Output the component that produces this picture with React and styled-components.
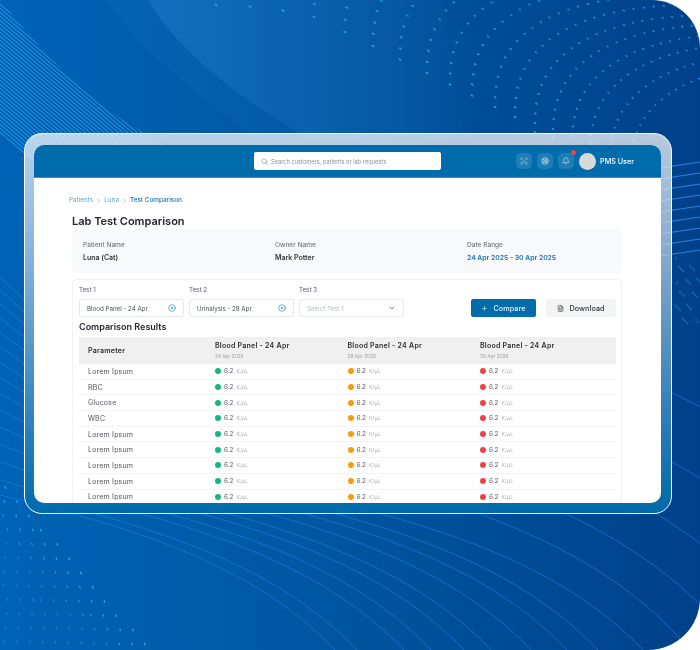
import React from "react";
import styled, { createGlobalStyle } from "styled-components";
import {
  Bell,
  ChevronDown,
  ChevronRight,
  CircleX,
  FileText,
  LifeBuoy,
  Plus,
  ScanFace,
  Search,
} from "lucide-react";

const GlobalStyle = createGlobalStyle`
  html, body { margin: 0; padding: 0; background: #fff; }
  * { box-sizing: border-box; }
  body { font-family: Inter, "Noto Sans", "Liberation Sans", sans-serif; }
`;

const Poster = styled.div`
  position: relative;
  width: 700px;
  height: 650px;
  overflow: hidden;
  border-radius: 0 48px 52px 0;
  background: linear-gradient(90deg, #0063b6 0%, #00559f 50%, #00408a 100%);
  padding: 133px 28px 136px 24px;
`;

const Backdrop = styled.svg`
  position: absolute;
  inset: 0;
  width: 700px;
  height: 650px;
`;

const Frame = styled.div`
  position: relative;
  height: 381px;
  border: 1px solid #fff;
  border-radius: 18px;
  padding: 11px 10px 10px 9px;
  will-change: transform;
  background: linear-gradient(
    180deg,
    rgba(255, 255, 255, 0.72) 0%,
    rgba(210, 225, 240, 0.66) 30%,
    rgba(60, 140, 195, 0.78) 75%,
    rgba(0, 108, 171, 0.95) 100%
  );
`;

const Screen = styled.div`
  height: 358px;
  overflow: hidden;
  border-radius: 10px;
  background: #fff;
`;

const Header = styled.header`
  height: 33px;
  display: flex;
  align-items: center;
  justify-content: space-between;
  padding: 0 27px 0 220px;
  background: #006cab;
  border-bottom: 1px solid #3f90c2;
`;

const SearchBox = styled.div`
  width: 187px;
  height: 18px;
  display: flex;
  align-items: center;
  gap: 3px;
  padding: 0 7px;
  background: #fff;
  border-radius: 2px;
  color: #8a8f98;
  font-size: 5.7px;
`;

const HeaderRight = styled.div`
  display: flex;
  align-items: center;
  gap: 5px;
  color: #fff;
`;

const IconChip = styled.div`
  position: relative;
  width: 16px;
  height: 16px;
  display: grid;
  place-items: center;
  border-radius: 5px;
  background: rgba(255, 255, 255, 0.12);
  color: #cfe3f1;
`;

const Badge = styled.span`
  position: absolute;
  top: -3px;
  right: -2px;
  width: 5px;
  height: 5px;
  border-radius: 50%;
  background: #ef4444;
`;

const Avatar = styled.div`
  width: 17px;
  height: 17px;
  border-radius: 50%;
  background: #d9d9d9;
`;

const UserName = styled.span`
  margin-left: -1px;
  font-size: 7.2px;
  font-weight: 500;
`;

const Page = styled.div`
  padding: 17px 39px 0 35px;
`;

const Crumbs = styled.nav`
  display: flex;
  align-items: center;
  gap: 2px;
  height: 10px;
  font-size: 6.4px;
  color: #67a5d0;
`;

const CrumbCurrent = styled.span`
  color: #1473b3;
  font-weight: 500;
`;

const Title = styled.h1`
  margin: 9px 0 1px 3px;
  height: 14px;
  font-size: 11px;
  line-height: 14px;
  font-weight: 600;
  color: #20242c;
`;

const InfoCard = styled.section`
  margin-left: 3px;
  height: 44px;
  display: grid;
  grid-template-columns: 192px 192px 1fr;
  padding: 12px 11px 0;
  background: #f8f9fb;
  border-radius: 4px;
`;

const InfoLabel = styled.div`
  font-size: 6.6px;
  line-height: 9px;
  color: #5d6470;
`;

const InfoValue = styled.div`
  margin-top: 3px;
  font-size: ${(p) => (p.$accent ? "6.8px" : "7px")};
  line-height: 9px;
  font-weight: 600;
  color: ${(p) => (p.$accent ? "#1473b3" : "#30343b")};
`;

const Panel = styled.section`
  margin: 6px 0 0 3px;
  height: 300px;
  padding: 5px 5px 0 6px;
  border: 1px solid #f1f2f4;
  border-radius: 4px;
`;

const Filters = styled.div`
  display: flex;
  align-items: flex-end;
  height: 32px;
`;

const Field = styled.div`
  width: 105px;
  margin-right: 5px;
`;

const FieldLabel = styled.div`
  height: 14px;
  font-size: 6.2px;
  line-height: 9px;
  color: #555b66;
`;

const Select = styled.div`
  height: 18px;
  display: flex;
  align-items: center;
  justify-content: space-between;
  padding: 0 7px;
  border: 1px solid #e4e7eb;
  border-radius: 3px;
  font-size: 6.2px;
  color: ${(p) => (p.$empty ? "#b4b8bf" : "#4a4f59")};
`;

const Actions = styled.div`
  margin-left: auto;
  display: flex;
  gap: 10px;
`;

const Button = styled.button`
  height: 18px;
  width: ${(p) => p.$width}px;
  display: flex;
  align-items: center;
  justify-content: center;
  gap: 5px;
  padding: 0;
  border: 0;
  border-radius: 2px;
  font: inherit;
  font-size: 7.2px;
  font-weight: 500;
  letter-spacing: 0.1px;
  background: ${(p) => (p.$primary ? "#006cab" : "#f3f4f6")};
  color: ${(p) => (p.$primary ? "#e6f1f8" : "#2f333a")};
`;

const SectionTitle = styled.h2`
  margin: 3px 0 3px;
  height: 14px;
  font-size: 9px;
  line-height: 14px;
  font-weight: 600;
  color: #23272e;
`;

const Table = styled.div`
  display: grid;
  grid-template-columns: 136px 132.5px 132.5px 1fr;
`;

const HeadCell = styled.div`
  height: 27px;
  display: flex;
  flex-direction: column;
  justify-content: center;
  background: #f0f0f0;
  padding-left: ${(p) => (p.$first ? "9px" : "0")};
`;

const HeadTitle = styled.div`
  font-size: 7px;
  line-height: 10px;
  font-weight: 600;
  letter-spacing: 0.25px;
  color: #2a2d33;
`;

const HeadDate = styled.div`
  margin-top: 2px;
  font-size: 4.8px;
  line-height: 7px;
  color: #9a9da3;
`;

const Cell = styled.div`
  height: 15.7px;
  display: flex;
  align-items: center;
  padding-left: ${(p) => (p.$first ? "9px" : "0")};
  border-bottom: 1px solid #f4f4f5;
  font-size: 7px;
  letter-spacing: 0.2px;
  color: #50545c;
`;

const StatusDot = styled.span`
  width: 6px;
  height: 6px;
  margin-right: 3px;
  border-radius: 50%;
  background: ${(p) => p.$color};
`;

const Reading = styled.span`
  font-size: 6.4px;
  letter-spacing: 0;
  color: #5a5e66;
`;

const Unit = styled.span`
  margin-left: 3px;
  font-size: 5.2px;
  letter-spacing: 0.1px;
  color: #adb0b5;
`;

const parameters = [
  "Lorem Ipsum",
  "RBC",
  "Glucose",
  "WBC",
  "Lorem Ipsum",
  "Lorem Ipsum",
  "Lorem Ipsum",
  "Lorem Ipsum",
  "Lorem Ipsum",
];

const columns = [
  { title: "Blood Panel - 24 Apr", date: "24 Apr 2025", color: "#10b981" },
  { title: "Blood Panel - 24 Apr", date: "28 Apr 2025", color: "#f59e0b" },
  { title: "Blood Panel - 24 Apr", date: "30 Apr 2025", color: "#ef4444" },
];

// dotted arcs at the top right of the artwork
const arcStops = [
  216, 250, 283, 314, 345, 373, 400, 427, 450, 472, 495, 515, 535, 553, 572, 590, 610, 630,
];

function arcDashes() {
  const dashes = [];
  arcStops.forEach((xv) => {
    const yEnd = 5 + 0.00125 * (xv - 216) ** 2;
    const top = 5 + (xv - 515) * 0.5;
    const a = 190;
    const b = 112;
    const step = 13 - (xv - 216) * 0.012;
    const rx = 2 - (xv - 216) * 0.0017;
    const points = [];
    for (let y = yEnd; y > top + b; y -= 1) points.push([xv, y]);
    for (let i = 0; i <= 200; i += 1) {
      const t = (i / 200) * (Math.PI / 2);
      points.push([
        xv + a * (1 - Math.cos(t) ** 0.8),
        top + b * (1 - Math.sin(t) ** 0.8),
      ]);
    }
    let run = step;
    let walked = 0;
    points.forEach(([x, y], i) => {
      if (i > 0) {
        const d = Math.hypot(x - points[i - 1][0], y - points[i - 1][1]);
        run += d;
        walked += d;
      }
      if (run >= step && x < 705 && y > -4) {
        run = 0;
        const opacity = Math.max(0.7, 1 - walked / 300);
        dashes.push({ x, y, rx, opacity, key: `${xv}-${i}` });
      }
    });
  });
  return dashes;
}

// dashes in the bottom left corner, brightest along the diagonal edge
function cornerDashes() {
  const dashes = [];
  for (let x = 3; x < 150; x += 12.5) {
    const edge = 484 + 1.14 * x;
    for (let y = edge; y < 655; y += 14) {
      const opacity = Math.max(0.45, 1 - (y - edge) / 110);
      dashes.push({ x: x + (y % 5), y, opacity, key: `${x}-${y}` });
    }
  }
  return dashes;
}

const sweepEnds = [335, 357, 404, 431, 464, 491, 531, 567, 598, 643, 690, 740, 800, 870, 950, 1040];

function Artwork() {
  return (
    <Backdrop viewBox="0 0 700 650">
      <defs>
        <linearGradient id="glow" x1="0" x2="1" y1="0" y2="0">
          <stop offset="0" stopColor="#4aa3f0" stopOpacity="0.2" />
          <stop offset="1" stopColor="#4aa3f0" stopOpacity="0" />
        </linearGradient>
        <clipPath id="fan">
          <path d="M0 0C40 50 90 105 150 136L200 175L0 175Z" />
        </clipPath>
      </defs>

      <path d="M105 0C130 35 180 85 250 133L450 260L500 0Z" fill="url(#glow)" opacity="0.35" />
      <path d="M148 0C170 40 225 90 300 133L480 220L440 0Z" fill="url(#glow)" />

      <g clipPath="url(#fan)" stroke="#2ba4f0" strokeWidth="0.9">
        {Array.from({ length: 34 }, (_, i) => (
          <line key={i} x1="-5" y1={i * 4 - 4} x2="200" y2={i * 4 + 170} />
        ))}
      </g>

      <g stroke="#2a8fe6" strokeWidth="0.7" opacity="0.65">
        {Array.from({ length: 14 }, (_, i) => {
          const y = 277 + i * 13 + i * i * 0.2;
          const slope = 0.95 - i * 0.05;
          return <line key={i} x1="0" y1={y} x2="60" y2={y + 60 * slope} />;
        })}
      </g>

      <g stroke="#2a8cf0" strokeWidth="0.9">
        {Array.from({ length: 9 }, (_, i) => (
          <line key={i} x1="660" y1={168 + i * 11} x2="700" y2={162 + i * 11} />
        ))}
      </g>

      <g fill="none" stroke="#1b7ce0" strokeWidth="0.8" opacity="0.85">
        {sweepEnds.map((xe) => {
          const y0 = xe > 643 ? 495 - (xe - 643) * 0.42 : 495;
          const h = 650 - y0;
          return (
            <path
              key={xe}
              d={`M${xe - 335} ${y0}C${xe - 215} ${y0 + h * 0.19} ${xe - 85} ${y0 + h * 0.42} ${xe} 650`}
            />
          );
        })}
      </g>

      <g fill="#1ea0f5">
        {arcDashes().map((d) => (
          <ellipse
            key={d.key}
            cx={d.x}
            cy={d.y}
            rx={d.rx}
            ry="0.9"
            opacity={d.opacity}
            transform={`rotate(30 ${d.x} ${d.y})`}
          />
        ))}
        {Array.from({ length: 30 }, (_, i) => (
          <ellipse
            key={i}
            cx={676 + (i * 7) % 24}
            cy={258 + (i * 13) % 66}
            rx="0.6"
            ry="1.4"
            opacity="0.6"
          />
        ))}
      </g>

      <g fill="#2aa8ff">
        {cornerDashes().map((d) => (
          <ellipse
            key={d.key}
            cx={d.x}
            cy={d.y}
            rx="0.7"
            ry="1.6"
            opacity={d.opacity}
            transform={`rotate(-20 ${d.x} ${d.y})`}
          />
        ))}
      </g>
    </Backdrop>
  );
}

function TestSelect({ label, value }) {
  return (
    <Field>
      <FieldLabel>{label}</FieldLabel>
      {value ? (
        <Select>
          {value}
          <CircleX size={8} color="#2f86c4" strokeWidth={2} />
        </Select>
      ) : (
        <Select $empty>
          Select Test 1
          <ChevronDown size={8} color="#444" strokeWidth={2} />
        </Select>
      )}
    </Field>
  );
}

export default function App() {
  return (
    <>
      <GlobalStyle />
      <Poster>
        <Artwork />
        <Frame>
          <Screen>
            <Header>
              <SearchBox>
                <Search size={7} color="#8a8f98" />
                Search customers, patients or lab requests
              </SearchBox>
              <HeaderRight>
                <IconChip>
                  <ScanFace size={8} />
                </IconChip>
                <IconChip>
                  <LifeBuoy size={8} />
                </IconChip>
                <IconChip>
                  <Bell size={8} />
                  <Badge />
                </IconChip>
                <Avatar />
                <UserName>PMS User</UserName>
              </HeaderRight>
            </Header>
            <Page>
              <Crumbs>
                Patients
                <ChevronRight size={7} />
                Luna
                <ChevronRight size={7} />
                <CrumbCurrent>Test Comparison</CrumbCurrent>
              </Crumbs>
              <Title>Lab Test Comparison</Title>
              <InfoCard>
                <div>
                  <InfoLabel>Patient Name</InfoLabel>
                  <InfoValue>Luna (Cat)</InfoValue>
                </div>
                <div>
                  <InfoLabel>Owner Name</InfoLabel>
                  <InfoValue>Mark Potter</InfoValue>
                </div>
                <div>
                  <InfoLabel>Date Range</InfoLabel>
                  <InfoValue $accent>24 Apr 2025 - 30 Apr 2025</InfoValue>
                </div>
              </InfoCard>
              <Panel>
                <Filters>
                  <TestSelect label="Test 1" value="Blood Panel - 24 Apr" />
                  <TestSelect label="Test 2" value="Urinalysis - 28 Apr" />
                  <TestSelect label="Test 3" />
                  <Actions>
                    <Button $primary $width={65}>
                      <Plus size={7} />
                      Compare
                    </Button>
                    <Button $width={70}>
                      <FileText size={7} />
                      Download
                    </Button>
                  </Actions>
                </Filters>
                <SectionTitle>Comparison Results</SectionTitle>
                <Table>
                  <HeadCell $first>
                    <HeadTitle>Parameter</HeadTitle>
                  </HeadCell>
                  {columns.map((col) => (
                    <HeadCell key={col.date}>
                      <HeadTitle>{col.title}</HeadTitle>
                      <HeadDate>{col.date}</HeadDate>
                    </HeadCell>
                  ))}
                  {parameters.map((name, i) => (
                    <React.Fragment key={i}>
                      <Cell $first>{name}</Cell>
                      {columns.map((col) => (
                        <Cell key={col.date}>
                          <StatusDot $color={col.color} />
                          <Reading>6.2</Reading>
                          <Unit>K/µL</Unit>
                        </Cell>
                      ))}
                    </React.Fragment>
                  ))}
                </Table>
              </Panel>
            </Page>
          </Screen>
        </Frame>
      </Poster>
    </>
  );
}
